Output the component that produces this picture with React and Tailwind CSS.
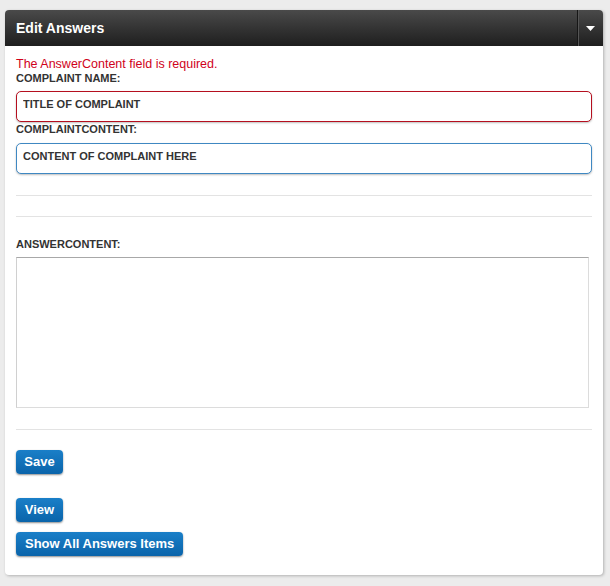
const fieldClass =
  'h-[31px] w-full rounded-[5px] bg-white px-[6px] pb-[5px] text-[11px] font-bold text-[#333] shadow-[0_1px_2px_rgba(0,0,0,0.25)] outline-none'

const btnClass =
  'h-[24px] rounded-[4px] bg-gradient-to-b from-[#1a7fc8] to-[#0a64aa] text-[13px] font-bold text-white shadow-[0_1px_2px_rgba(0,0,0,0.45)]'

export default function App() {
  return (
    <div className="min-h-[586px] bg-[#ececec] pb-[10px] pl-[5px] pr-[7px] pt-[10px] font-['Liberation_Sans',Arial,sans-serif]">
      <div className="overflow-hidden rounded-[4px] bg-white shadow-[1px_1px_3px_rgba(0,0,0,0.25)]">
        <div className="flex h-[36px] items-stretch bg-gradient-to-b from-[#4a4a4a] to-[#1f1f1f]">
          <h2 className="flex flex-1 items-center pl-[11px] text-[14px] font-bold text-white">Edit Answers</h2>
          <button className="flex w-[26px] items-center justify-center border-l border-[#161616] shadow-[inset_1px_0_0_#555]">
            <svg width="9" height="5" viewBox="0 0 9 5">
              <path d="M0 0h9L4.5 5z" fill="#fff" />
            </svg>
          </button>
        </div>

        <div className="px-[11px] pb-[19px] pt-[11px]">
          <p className="text-[12.5px] leading-[15px] text-[#d0021b]">The AnswerContent field is required.</p>
          <label className="block text-[11px] font-bold leading-[13px] text-[#333]">COMPLAINT NAME:</label>
          <input
            className={`${fieldClass} mt-[6px] border border-[#b50f1f]`}
            defaultValue="TITLE OF COMPLAINT"
          />
          <label className="mt-[1px] block text-[11px] font-bold leading-[13px] text-[#333]">COMPLAINTCONTENT:</label>
          <input
            className={`${fieldClass} mt-[7px] border border-[#3f88c2]`}
            defaultValue="CONTENT OF COMPLAINT HERE"
          />

          <hr className="mt-[21px] border-t border-[#e3e3e3]" />
          <hr className="mt-[20px] border-t border-[#e3e3e3]" />

          <label className="mt-[21px] block text-[11px] font-bold leading-[13px] text-[#333]">ANSWERCONTENT:</label>
          <textarea className="mt-[6px] block h-[151px] w-[573px] resize-none border border-[#dcdcdc] border-t-[#a8a8a8] border-l-[#d0d0d0] outline-none" />

          <hr className="mt-[21px] border-t border-[#e3e3e3]" />

          <div className="mt-[20px] flex flex-col items-start">
            <button className={`${btnClass} w-[47px]`}>Save</button>
            <button className={`${btnClass} mt-[24px] w-[47px]`}>View</button>
            <button className={`${btnClass} mt-[10px] px-[9px]`}>Show All Answers Items</button>
          </div>
        </div>
      </div>
    </div>
  )
}
